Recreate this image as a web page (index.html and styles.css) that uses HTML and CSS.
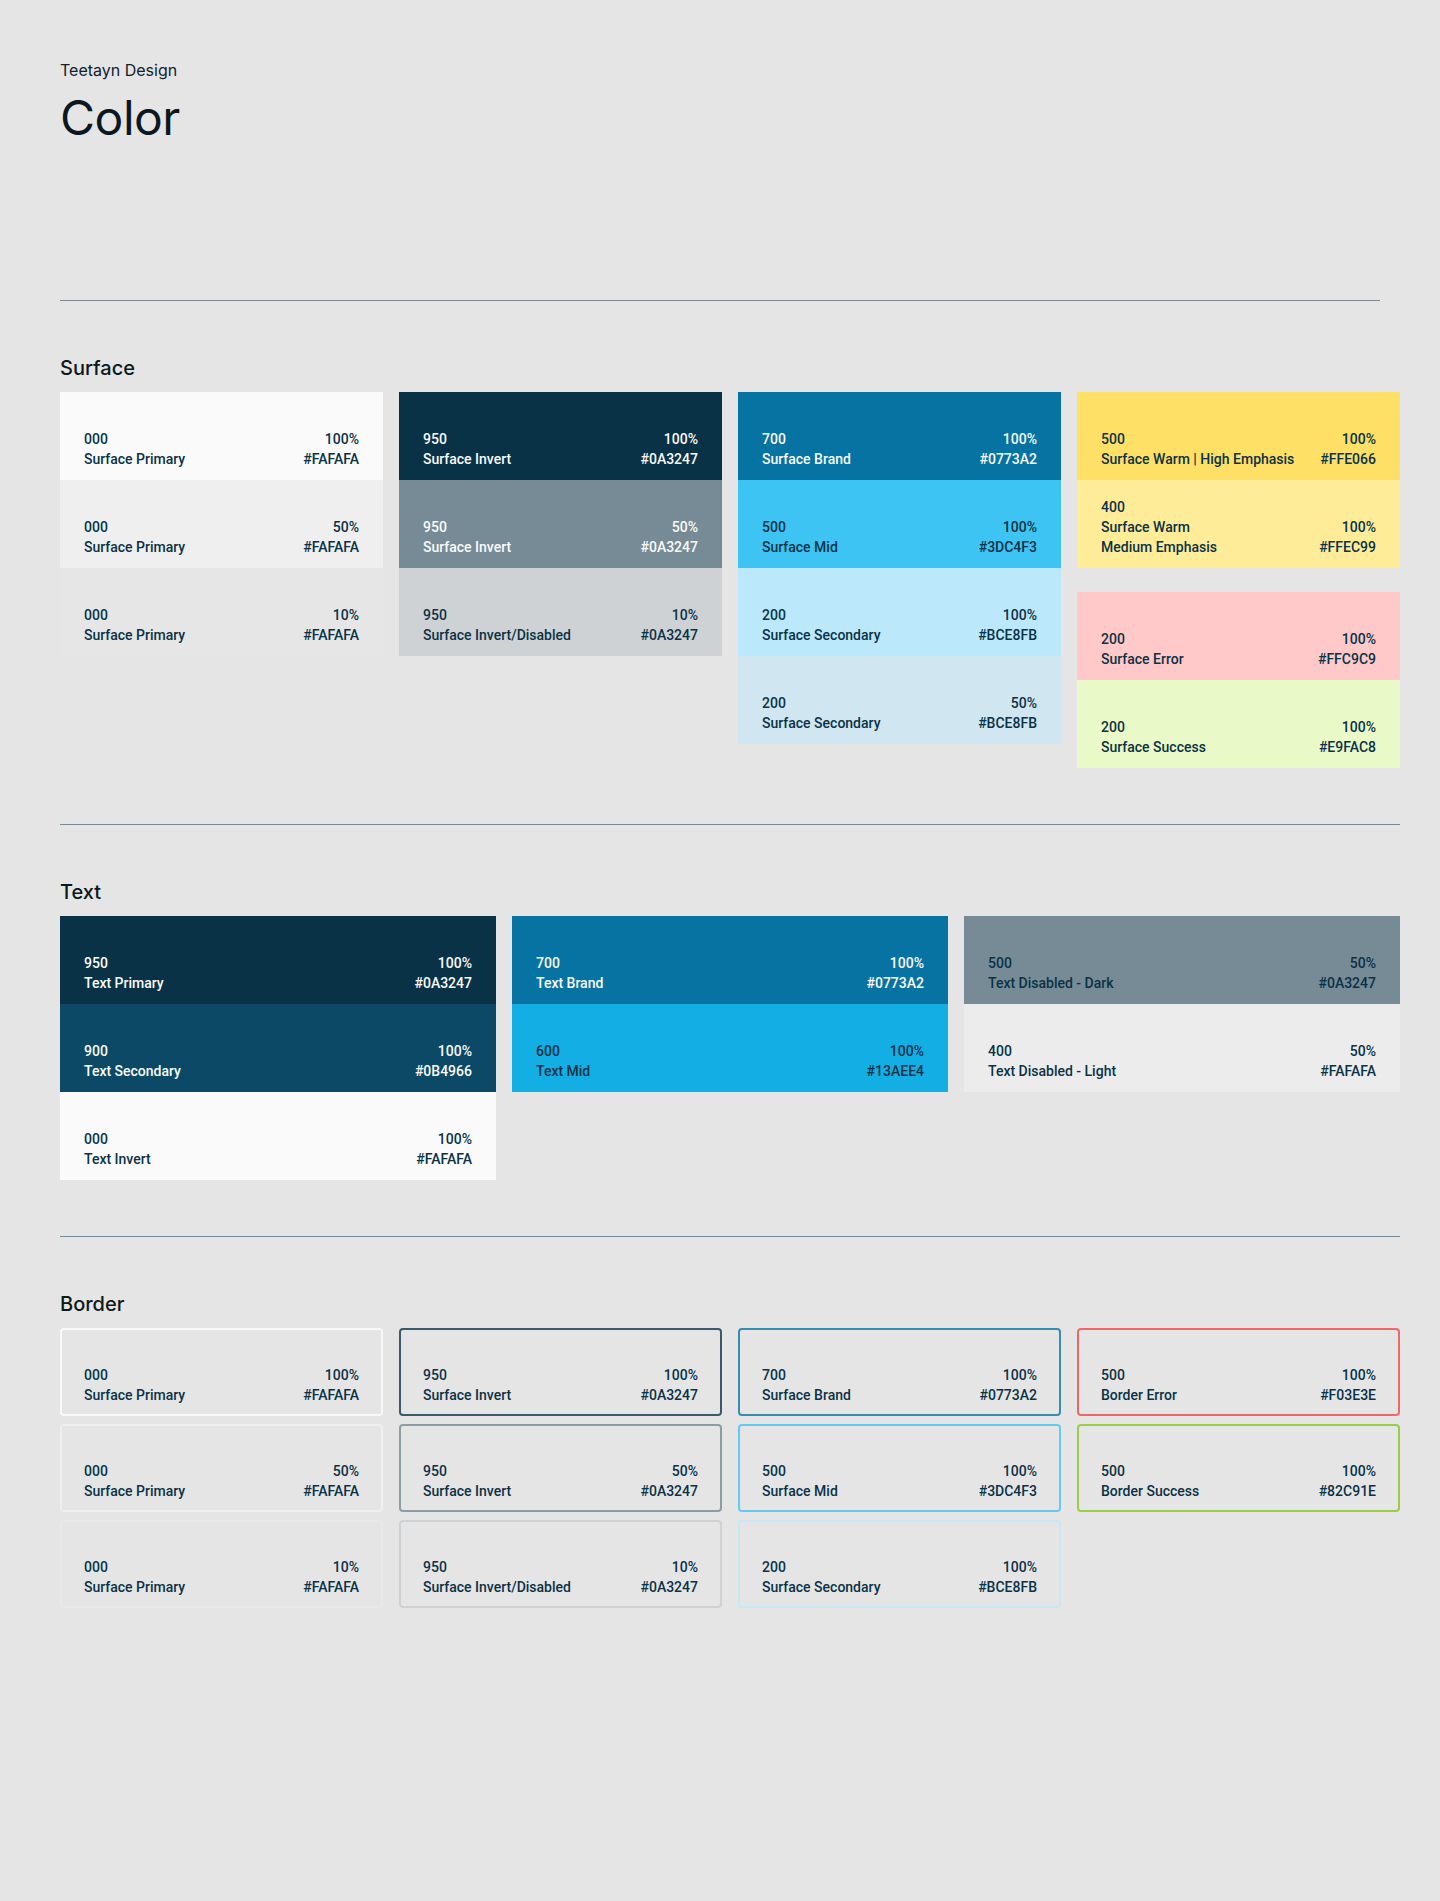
FILE: index.html
```html
<!DOCTYPE html>
<html lang="en">
<head>
<meta charset="utf-8">
<title>Teetayn Design — Color</title>
<link rel="stylesheet" href="styles.css">
</head>
<body>
<div class="page">
  <header class="head">
    <div class="brand">Teetayn Design</div>
    <h1 class="title">Color</h1>
  </header>
  <hr class="rule rule-short">

  <section class="section">
    <h2 class="section-title">Surface</h2>
    <div class="grid grid-4">
      <div class="col">
        <div class="sw bg-fa-100"><div class="l"><span>000</span><span>Surface Primary</span></div><div class="r"><span>100%</span><span>#FAFAFA</span></div></div>
        <div class="sw bg-fa-50"><div class="l"><span>000</span><span>Surface Primary</span></div><div class="r"><span>50%</span><span>#FAFAFA</span></div></div>
        <div class="sw bg-fa-10"><div class="l"><span>000</span><span>Surface Primary</span></div><div class="r"><span>10%</span><span>#FAFAFA</span></div></div>
      </div>
      <div class="col">
        <div class="sw bg-navy-100 light"><div class="l"><span>950</span><span>Surface Invert</span></div><div class="r"><span>100%</span><span>#0A3247</span></div></div>
        <div class="sw bg-navy-50 light"><div class="l"><span>950</span><span>Surface Invert</span></div><div class="r"><span>50%</span><span>#0A3247</span></div></div>
        <div class="sw bg-navy-10"><div class="l"><span>950</span><span>Surface Invert/Disabled</span></div><div class="r"><span>10%</span><span>#0A3247</span></div></div>
      </div>
      <div class="col">
        <div class="sw bg-brand light"><div class="l"><span>700</span><span>Surface Brand</span></div><div class="r"><span>100%</span><span>#0773A2</span></div></div>
        <div class="sw bg-mid"><div class="l"><span>500</span><span>Surface Mid</span></div><div class="r"><span>100%</span><span>#3DC4F3</span></div></div>
        <div class="sw bg-sec-100"><div class="l"><span>200</span><span>Surface Secondary</span></div><div class="r"><span>100%</span><span>#BCE8FB</span></div></div>
        <div class="sw bg-sec-50"><div class="l"><span>200</span><span>Surface Secondary</span></div><div class="r"><span>50%</span><span>#BCE8FB</span></div></div>
      </div>
      <div class="col col-split">
        <div class="group">
          <div class="sw bg-warm-hi"><div class="l"><span>500</span><span>Surface Warm | High Emphasis</span></div><div class="r"><span>100%</span><span>#FFE066</span></div></div>
          <div class="sw bg-warm-md"><div class="l"><span>400</span><span>Surface Warm</span><span>Medium Emphasis</span></div><div class="r"><span>100%</span><span>#FFEC99</span></div></div>
        </div>
        <div class="group">
          <div class="sw bg-error"><div class="l"><span>200</span><span>Surface Error</span></div><div class="r"><span>100%</span><span>#FFC9C9</span></div></div>
          <div class="sw bg-success"><div class="l"><span>200</span><span>Surface Success</span></div><div class="r"><span>100%</span><span>#E9FAC8</span></div></div>
        </div>
      </div>
    </div>
  </section>
  <hr class="rule">

  <section class="section">
    <h2 class="section-title">Text</h2>
    <div class="grid grid-3">
      <div class="col">
        <div class="sw bg-navy-100 light"><div class="l"><span>950</span><span>Text Primary</span></div><div class="r"><span>100%</span><span>#0A3247</span></div></div>
        <div class="sw bg-navy-900 light"><div class="l"><span>900</span><span>Text Secondary</span></div><div class="r"><span>100%</span><span>#0B4966</span></div></div>
        <div class="sw bg-fa-100"><div class="l"><span>000</span><span>Text Invert</span></div><div class="r"><span>100%</span><span>#FAFAFA</span></div></div>
      </div>
      <div class="col">
        <div class="sw bg-brand light"><div class="l"><span>700</span><span>Text Brand</span></div><div class="r"><span>100%</span><span>#0773A2</span></div></div>
        <div class="sw bg-text-mid"><div class="l"><span>600</span><span>Text Mid</span></div><div class="r"><span>100%</span><span>#13AEE4</span></div></div>
      </div>
      <div class="col">
        <div class="sw bg-navy-50"><div class="l"><span>500</span><span>Text Disabled - Dark</span></div><div class="r"><span>50%</span><span>#0A3247</span></div></div>
        <div class="sw bg-fa-40"><div class="l"><span>400</span><span>Text Disabled - Light</span></div><div class="r"><span>50%</span><span>#FAFAFA</span></div></div>
      </div>
    </div>
  </section>
  <hr class="rule">

  <section class="section">
    <h2 class="section-title">Border</h2>
    <div class="grid grid-4">
      <div class="col col-gap">
        <div class="sw bd bd-fa-100"><div class="l"><span>000</span><span>Surface Primary</span></div><div class="r"><span>100%</span><span>#FAFAFA</span></div></div>
        <div class="sw bd bd-fa-50"><div class="l"><span>000</span><span>Surface Primary</span></div><div class="r"><span>50%</span><span>#FAFAFA</span></div></div>
        <div class="sw bd bd-fa-10"><div class="l"><span>000</span><span>Surface Primary</span></div><div class="r"><span>10%</span><span>#FAFAFA</span></div></div>
      </div>
      <div class="col col-gap">
        <div class="sw bd bd-navy-100"><div class="l"><span>950</span><span>Surface Invert</span></div><div class="r"><span>100%</span><span>#0A3247</span></div></div>
        <div class="sw bd bd-navy-50"><div class="l"><span>950</span><span>Surface Invert</span></div><div class="r"><span>50%</span><span>#0A3247</span></div></div>
        <div class="sw bd bd-navy-10"><div class="l"><span>950</span><span>Surface Invert/Disabled</span></div><div class="r"><span>10%</span><span>#0A3247</span></div></div>
      </div>
      <div class="col col-gap">
        <div class="sw bd bd-brand"><div class="l"><span>700</span><span>Surface Brand</span></div><div class="r"><span>100%</span><span>#0773A2</span></div></div>
        <div class="sw bd bd-mid"><div class="l"><span>500</span><span>Surface Mid</span></div><div class="r"><span>100%</span><span>#3DC4F3</span></div></div>
        <div class="sw bd bd-sec"><div class="l"><span>200</span><span>Surface Secondary</span></div><div class="r"><span>100%</span><span>#BCE8FB</span></div></div>
      </div>
      <div class="col col-gap">
        <div class="sw bd bd-error"><div class="l"><span>500</span><span>Border Error</span></div><div class="r"><span>100%</span><span>#F03E3E</span></div></div>
        <div class="sw bd bd-success"><div class="l"><span>500</span><span>Border Success</span></div><div class="r"><span>100%</span><span>#82C91E</span></div></div>
      </div>
    </div>
  </section>
</div>
</body>
</html>
```

FILE: styles.css
```css
* { box-sizing: border-box; }

html, body {
  margin: 0;
  padding: 0;
  background: #E5E5E5;
}

body {
  font-family: "Roboto", "Liberation Sans", sans-serif;
  color: #0A3247;
  min-height: 1901px;
}

.page {
  padding: 60px 40px 0 60px;
}

.head {
  display: flex;
  flex-direction: column;
  gap: 10px;
}

.brand {
  font-family: "Inter", "Liberation Sans", sans-serif;
  font-size: 16px;
  line-height: 20px;
  font-weight: 400;
  color: #10222E;
}

.title {
  margin: 0;
  font-family: "Inter", "Liberation Sans", sans-serif;
  font-size: 48px;
  line-height: 56px;
  font-weight: 400;
  color: #0B1820;
  letter-spacing: -0.01em;
}

.rule {
  margin: 0;
  border: 0;
  height: 1px;
  background: #778B96;
}

.rule-short {
  margin-top: 154px;
  margin-right: 20px;
  background: #7F8990;
}

.section {
  padding: 55px 0 56px;
}

.section-title {
  margin: 0 0 12px;
  font-family: "Inter", "Liberation Sans", sans-serif;
  font-size: 20px;
  line-height: 24px;
  font-weight: 500;
  color: #0B1820;
}

.grid {
  display: grid;
  align-items: start;
  column-gap: 16px;
}

.grid-4 { grid-template-columns: repeat(4, 1fr); }
.grid-3 { grid-template-columns: repeat(3, 1fr); }

.col {
  display: flex;
  flex-direction: column;
}

.col-split { gap: 24px; }
.col-gap { gap: 8px; }

.group {
  display: flex;
  flex-direction: column;
}

/* swatch */
.sw {
  height: 88px;
  padding: 0 24px 11px;
  display: flex;
  justify-content: space-between;
  align-items: flex-end;
  font-size: 14px;
  line-height: 20px;
  font-weight: 500;
  color: #0A3247;
}

.sw .l, .sw .r {
  display: flex;
  flex-direction: column;
}

.sw .r { text-align: right; align-items: flex-end; }

.sw.light { color: #FAFAFA; }

.bg-fa-100 { background: #FAFAFA; }
.bg-fa-50 { background: rgba(250, 250, 250, 0.5); }
.bg-fa-40 { background: rgba(250, 250, 250, 0.35); }
.bg-fa-10 { background: rgba(250, 250, 250, 0.1); }
.bg-navy-100 { background: #0A3247; }
.bg-navy-50 { background: rgba(10, 50, 71, 0.5); }
.bg-navy-10 { background: rgba(10, 50, 71, 0.1); }
.bg-navy-900 { background: #0B4966; }
.bg-brand { background: #0773A2; }
.bg-mid { background: #3DC4F3; }
.bg-sec-100 { background: #BCE8FB; }
.bg-sec-50 { background: rgba(188, 232, 251, 0.5); }
.bg-warm-hi { background: #FFE066; }
.bg-warm-md { background: #FFEC99; }
.bg-error { background: #FFC9C9; }
.bg-success { background: #E9FAC8; }
.bg-text-mid { background: #13AEE4; }

/* border swatches */
.bd {
  border: 2px solid transparent;
  border-radius: 4px;
  padding: 0 22px 9px;
}

.bd-fa-100 { border-color: rgba(250, 250, 250, 0.9); }
.bd-fa-50 { border-color: rgba(250, 250, 250, 0.45); }
.bd-fa-10 { border-color: rgba(250, 250, 250, 0.15); }
.bd-navy-100 { border-color: rgba(10, 50, 71, 0.78); }
.bd-navy-50 { border-color: rgba(10, 50, 71, 0.4); }
.bd-navy-10 { border-color: rgba(10, 50, 71, 0.1); }
.bd-brand { border-color: rgba(7, 115, 162, 0.78); }
.bd-mid { border-color: rgba(61, 196, 243, 0.78); }
.bd-sec { border-color: rgba(188, 232, 251, 0.78); }
.bd-error { border-color: rgba(240, 62, 62, 0.75); }
.bd-success { border-color: rgba(130, 201, 30, 0.78); }
```
